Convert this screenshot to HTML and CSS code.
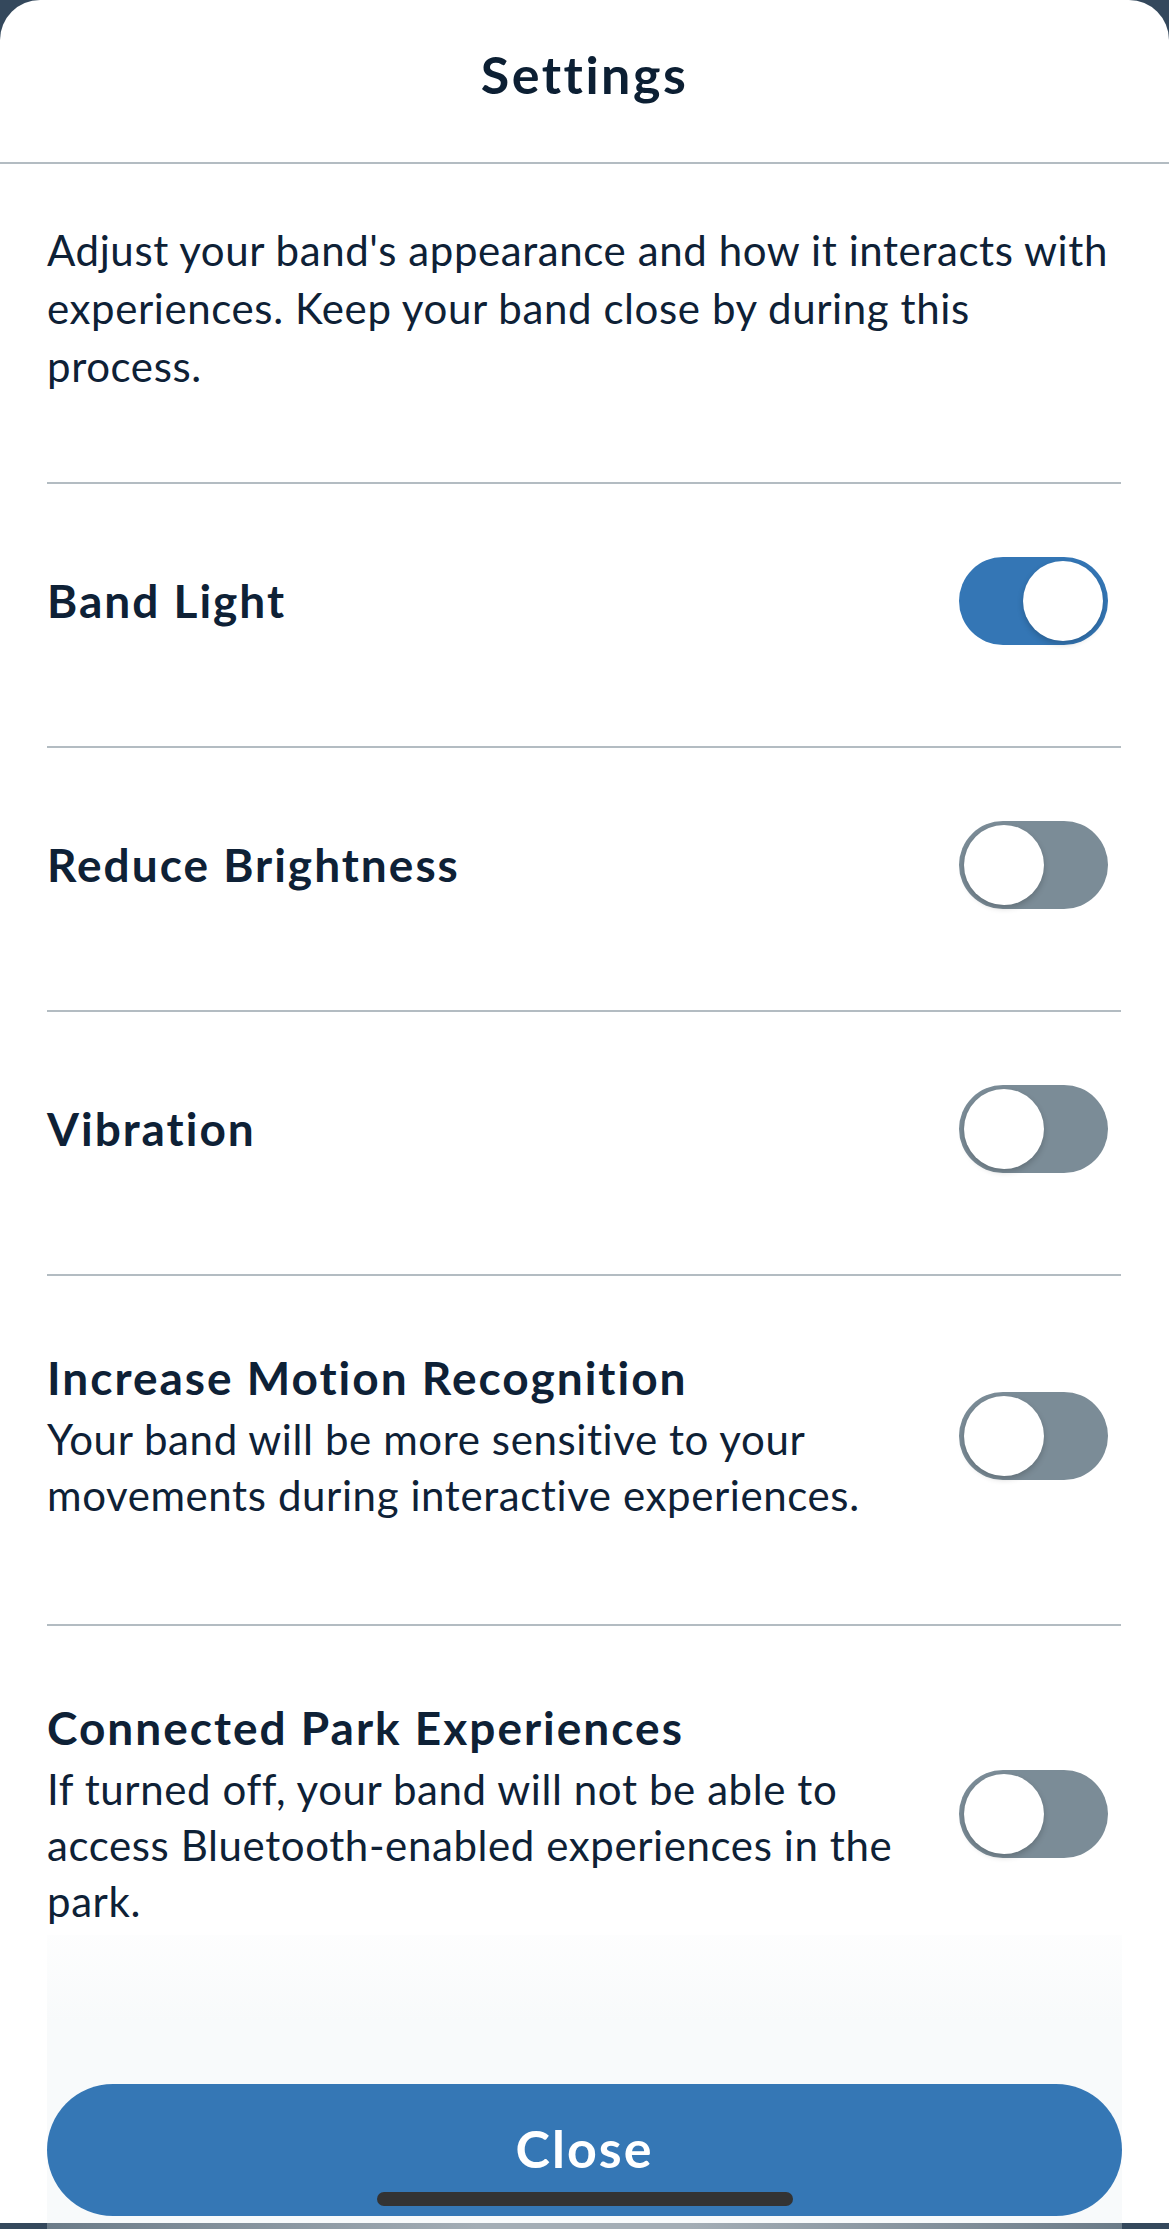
FILE: index.html
```html
<!DOCTYPE html>
<html lang="en">
<head>
    <meta charset="UTF-8">
    <meta name="viewport" content="width=device-width, initial-scale=1.0">
    <title>Settings</title>
    <link rel="stylesheet" href="styles.css">
</head>
<body>
    <!-- Bottom sheet -->
    <div class="sheet">
        <header class="sheet-header">
            <h1>Settings</h1>
        </header>

        <div class="sheet-body">
            <p class="intro">Adjust your band's appearance and how it interacts with experiences. Keep your band close by during this process.</p>

            <div class="setting-row">
                <div class="setting-text">
                    <div class="setting-title">Band Light</div>
                </div>
                <div class="toggle is-on"><span class="knob"></span></div>
            </div>

            <div class="setting-row">
                <div class="setting-text">
                    <div class="setting-title">Reduce Brightness</div>
                </div>
                <div class="toggle"><span class="knob"></span></div>
            </div>

            <div class="setting-row">
                <div class="setting-text">
                    <div class="setting-title">Vibration</div>
                </div>
                <div class="toggle"><span class="knob"></span></div>
            </div>

            <div class="setting-row">
                <div class="setting-text">
                    <div class="setting-title">Increase Motion Recognition</div>
                    <div class="setting-desc">Your band will be more sensitive to your movements during interactive experiences.</div>
                </div>
                <div class="toggle"><span class="knob"></span></div>
            </div>

            <div class="setting-row last">
                <div class="setting-text">
                    <div class="setting-title">Connected Park Experiences</div>
                    <div class="setting-desc">If turned off, your band will not be able to access Bluetooth-enabled experiences in the park.</div>
                </div>
                <div class="toggle"><span class="knob"></span></div>
            </div>
        </div>

        <!-- Sticky footer with close button -->
        <div class="sheet-footer">
            <button class="close-btn">Close</button>
            <div class="home-indicator"></div>
        </div>
    </div>
    <div class="backdrop-strip"></div>
</body>
</html>
```

FILE: styles.css
```css
/* Reset and base styles */
* {
    margin: 0;
    padding: 0;
    box-sizing: border-box;
}

body {
    background-color: #34485c;
    color: #0e2136;
    font-family: Lato, "Noto Sans", sans-serif;
    width: 1169px;
}

/* Sheet */
.sheet {
    background: #fff;
    border-radius: 40px 40px 0 0;
    height: 2223px;
    display: flex;
    flex-direction: column;
    overflow: hidden;
}

.sheet-header {
    padding: 43px 0 57px;
    border-bottom: 2px solid #b3bcc2;
    text-align: center;
}

.sheet-header h1 {
    font-size: 52px;
    line-height: 62px;
    font-weight: 700;
    letter-spacing: 2.5px;
    color: #0c1f33;
}

.sheet-body {
    padding: 0 48px 0 47px;
}

.intro {
    font-size: 42px;
    line-height: 58px;
    letter-spacing: 0.6px;
    padding: 57px 0 87px;
    border-bottom: 2px solid #b3bcc2;
}

/* Setting rows */
.setting-row {
    display: flex;
    align-items: center;
    justify-content: space-between;
    gap: 40px;
    padding: 73px 13px 101px 0;
    border-bottom: 2px solid #b3bcc2;
}

.setting-row.last {
    padding-bottom: 0;
    border-bottom: none;
}

.setting-title {
    font-size: 46px;
    line-height: 58px;
    font-weight: 700;
    letter-spacing: 2px;
}

.setting-desc {
    font-size: 42px;
    line-height: 56px;
    letter-spacing: 0.6px;
    margin-top: 4px;
}

/* Toggle switch */
.toggle {
    flex-shrink: 0;
    width: 149px;
    height: 88px;
    border-radius: 44px;
    background: #7b8c97;
    padding: 4px 5px;
    display: flex;
    justify-content: flex-start;
}

.toggle.is-on {
    background: #3476b5;
    justify-content: flex-end;
}

.knob {
    width: 80px;
    height: 80px;
    border-radius: 50%;
    background: #fff;
    box-shadow: 0 3px 6px rgba(0, 0, 0, 0.2);
}

/* Footer */
.sheet-footer {
    margin: auto 47px 0;
    padding: 149px 0 7px;
    background: linear-gradient(to bottom, rgba(248, 250, 251, 0.3), #f8fafb 30%);
    position: relative;
}

.close-btn {
    display: flex;
    align-items: center;
    justify-content: center;
    width: 100%;
    height: 132px;
    border: none;
    border-radius: 66px;
    background: #3577b5;
    color: #fff;
    font-family: Lato, "Noto Sans", sans-serif;
    font-size: 52px;
    font-weight: 700;
    letter-spacing: 2px;
    padding-bottom: 4px;
}

.home-indicator {
    position: absolute;
    left: 330px;
    bottom: 17px;
    width: 416px;
    height: 14px;
    border-radius: 7px;
    background: #333;
}

.backdrop-strip {
    height: 6px;
    margin: 0 47px;
    background: linear-gradient(to right, #6b7b88, #a3adb5 40%, #a3adb5 60%, #6b7b88);
}
```
